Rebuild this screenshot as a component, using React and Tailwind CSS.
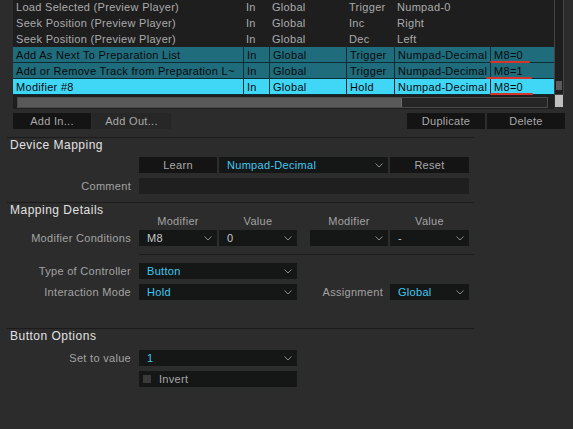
import React from "react";

const rows = [
  { name: "Load Selected (Preview Player)", io: "In", assign: "Global", type: "Trigger", key: "Numpad-0", cond: "", tone: "plain" },
  { name: "Seek Position (Preview Player)", io: "In", assign: "Global", type: "Inc", key: "Right", cond: "", tone: "plain" },
  { name: "Seek Position (Preview Player)", io: "In", assign: "Global", type: "Dec", key: "Left", cond: "", tone: "plain" },
  { name: "Add As Next To Preparation List", io: "In", assign: "Global", type: "Trigger", key: "Numpad-Decimal", cond: "M8=0", tone: "teal", mark: "w-[40px] left-[-1px]" },
  { name: "Add or Remove Track from Preparation L~", io: "In", assign: "Global", type: "Trigger", key: "Numpad-Decimal", cond: "M8=1", tone: "teal", mark: "w-[46px] left-[-5px]" },
  { name: "Modifier #8", io: "In", assign: "Global", type: "Hold", key: "Numpad-Decimal", cond: "M8=0", tone: "cyan", mark: "w-[43px] left-[-1px]" },
];

const cols = ["w-[230px]", "w-[26px]", "w-[77px]", "w-[48px]", "w-[96px]", "w-[62px]"];

// Chevron used on every dropdown box.
function Chevron() {
  return (
    <svg width="8" height="5" viewBox="0 0 8 5" className="shrink-0">
      <polyline points="0.5,0.5 4,4 7.5,0.5" fill="none" stroke="#8a8a8a" strokeWidth="1" />
    </svg>
  );
}

function Select({ width, value, accent }) {
  return (
    <div className={`${width} h-[16px] bg-[#151616] flex items-center justify-between pl-[8px] pr-[5px]`}>
      <span className={accent ? "text-[#3ec9f2]" : "text-[#c8c8c8]"}>{value}</span>
      <Chevron />
    </div>
  );
}

function Button({ width, label, dim }) {
  return (
    <div className={`${width} h-[16px] ${dim ? "bg-[#272727]" : "bg-[#141414]"} flex items-center justify-center text-[#a9a9a9]`}>
      {label}
    </div>
  );
}

function Label({ children, width = "w-[131px]" }) {
  return <div className={`${width} h-[16px] text-right text-[#a3a3a3]`}>{children}</div>;
}

function SectionTitle({ children }) {
  return (
    <div className="ml-[7px] w-[467px] border-t border-[#1b1b1b] h-[15px] flex items-center pl-[3px] text-[12px] tracking-[0.5px] text-[#e2e2e2]">
      {children}
    </div>
  );
}

function TableRow({ row }) {
  const bg = row.tone === "cyan" ? "bg-[#40d7f7]" : row.tone === "teal" ? "bg-[#1f6c7d]" : "";
  const text = row.tone === "plain" ? "text-[#ababab]" : "text-[#0a0a0a]";
  const line = row.tone === "plain" ? "border-transparent" : "border-[#0c2d35]";
  const cells = [row.name, row.io, row.assign, row.type, row.key, row.cond];
  return (
    <div className={`flex h-[16px] ${bg} ${text} border-b ${line}`}>
      {cells.map((c, i) => (
        <div
          key={i}
          className={`${cols[i]} relative pl-[3px] flex items-center whitespace-nowrap ${i > 0 && row.tone !== "plain" ? "border-l border-[#0c2d35]" : ""}`}
        >
          {c}
          {i === 5 && row.mark ? (
            <span className={`absolute bottom-[-1px] h-[2px] bg-[#d8342b] rounded-full ${row.mark}`} />
          ) : null}
        </div>
      ))}
    </div>
  );
}

export default function App() {
  return (
    <div className="w-[573px] h-[429px] overflow-hidden bg-[#2c2c2c] text-[11px] leading-[16px] tracking-[0.3px] font-['Liberation_Sans',Arial,sans-serif]">
      {/* mapping list */}
      <div className="ml-[13px] mt-[-1px] flex">
        <div className="w-[541px] bg-[#1e1e1e]">
          {rows.map((r, i) => (
            <TableRow key={i} row={r} />
          ))}
          <div className="h-[14px] flex items-center pl-[4px]">
            <div className="w-[531px] h-[11px] border border-[#4a4a4a] bg-[#262626] flex">
              <div className="w-[384px] h-full bg-[#595959] border-r border-[#6a6a6a]" />
            </div>
          </div>
        </div>
        <div className="w-[10px] flex flex-col">
          <div className="h-[96px] border border-[#444] bg-[#1e1e1e] flex flex-col justify-end items-center pb-[4px]">
            <div className="w-[6px] h-[9px] bg-[#5a5a5a]" />
          </div>
          <div className="h-[12px] bg-[#c0c0c0] mx-[1px]" />
        </div>
      </div>

      {/* list buttons */}
      <div className="mt-[4px] flex ml-[13px]">
        <Button width="w-[78px]" label="Add In..." />
        <div className="w-[1px]" />
        <Button width="w-[79px]" label="Add Out..." dim />
        <div className="w-[236px]" />
        <Button width="w-[78px]" label="Duplicate" />
        <div className="w-[2px]" />
        <Button width="w-[78px]" label="Delete" />
      </div>

      <div className="mt-[8px]" />
      <SectionTitle>Device Mapping</SectionTitle>
      <div className="mt-[5px] flex">
        <div className="w-[139px]" />
        <Button width="w-[78px]" label="Learn" />
        <div className="w-[2px]" />
        <Select width="w-[169px]" value="Numpad-Decimal" accent />
        <div className="w-[2px]" />
        <Button width="w-[79px]" label="Reset" />
      </div>
      <div className="mt-[5px] flex items-center">
        <Label>Comment</Label>
        <div className="w-[8px]" />
        <div className="w-[330px] h-[16px] bg-[#1f1f1f]" />
      </div>

      <div className="mt-[8px]" />
      <SectionTitle>Mapping Details</SectionTitle>
      <div className="flex h-[8px] items-center text-[#a3a3a3]">
        <div className="w-[139px]" />
        <div className="w-[78px] text-center">Modifier</div>
        <div className="w-[2px]" />
        <div className="w-[78px] text-center">Value</div>
        <div className="w-[13px]" />
        <div className="w-[78px] text-center">Modifier</div>
        <div className="w-[2px]" />
        <div className="w-[79px] text-center">Value</div>
      </div>
      <div className="mt-[5px] flex items-center">
        <Label>Modifier Conditions</Label>
        <div className="w-[8px]" />
        <Select width="w-[78px]" value="M8" />
        <div className="w-[2px]" />
        <Select width="w-[78px]" value="0" />
        <div className="w-[13px]" />
        <Select width="w-[78px]" value="" />
        <div className="w-[2px]" />
        <Select width="w-[79px]" value="-" />
      </div>
      <div className="ml-[139px] mt-[8px] w-[335px] border-t border-[#1b1b1b]" />
      <div className="mt-[8px] flex items-center">
        <Label>Type of Controller</Label>
        <div className="w-[8px]" />
        <Select width="w-[158px]" value="Button" accent />
      </div>
      <div className="mt-[5px] flex items-center">
        <Label>Interaction Mode</Label>
        <div className="w-[8px]" />
        <Select width="w-[158px]" value="Hold" accent />
        <Label width="w-[86px]">Assignment</Label>
        <div className="w-[7px]" />
        <Select width="w-[79px]" value="Global" accent />
      </div>

      <div className="mt-[28px]" />
      <SectionTitle>Button Options</SectionTitle>
      <div className="mt-[7px] flex items-center">
        <Label>Set to value</Label>
        <div className="w-[8px]" />
        <Select width="w-[158px]" value="1" accent />
      </div>
      <div className="mt-[5px] flex">
        <div className="w-[139px]" />
        <div className="w-[158px] h-[16px] bg-[#151616] flex items-center pl-[4px] text-[#a9a9a9]">
          <div className="w-[8px] h-[8px] bg-[#3a3a3a]" />
          <span className="ml-[8px]">Invert</span>
        </div>
      </div>
    </div>
  );
}
